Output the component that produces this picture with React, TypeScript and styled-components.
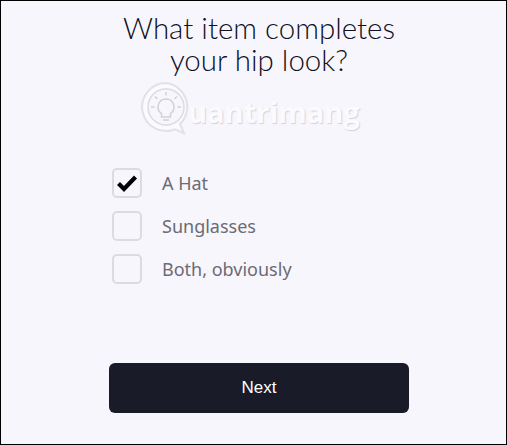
import { createGlobalStyle } from "styled-components";
import styled from "styled-components";

const GlobalStyle = createGlobalStyle`
  html, body {
    margin: 0;
    padding: 0;
  }
`;

const Page = styled.div`
  position: relative;
  box-sizing: border-box;
  width: 507px;
  height: 445px;
  display: flex;
  flex-direction: column;
  align-items: center;
  padding-left: 11px;
  background-color: #f8f6fd;
  border: 1px solid #000;
  overflow: hidden;
`;

const Title = styled.h1`
  margin: 11px 0 0;
  font-family: "Lato", sans-serif;
  font-weight: 300;
  font-size: 29.5px;
  line-height: 32px;
  color: #0f1020;
  text-align: center;
`;

const Options = styled.div`
  display: flex;
  flex-direction: column;
  gap: 13px;
  align-self: flex-start;
  margin: 92px 0 0 100px;
`;

const Option = styled.label`
  display: flex;
  align-items: center;
  gap: 20px;
  font-family: "Noto Sans", sans-serif;
  font-size: 18px;
  color: #6b6b73;
`;

const Box = styled.span`
  box-sizing: border-box;
  width: 30px;
  height: 30px;
  display: flex;
  align-items: center;
  justify-content: center;
  border: 2px solid #dcdbe0;
  border-radius: 5px;
`;

const NextButton = styled.button`
  width: 300px;
  height: 50px;
  margin-top: 79px;
  border: none;
  border-radius: 6px;
  background-color: #1a1b28;
  color: #fff;
  font-family: "Liberation Sans", sans-serif;
  font-size: 17px;
  font-weight: 400;
`;

const Watermark = styled.div`
  position: absolute;
  left: 138px;
  top: 80px;
  display: flex;
  align-items: flex-start;
`;

const WatermarkText = styled.span`
  margin: 13px 0 0 -5px;
  font-family: "Open Sans", sans-serif;
  font-size: 29px;
  font-weight: 700;
  line-height: 36px;
  color: #fbfafe;
  text-shadow: 1px 1px 1px #d4d3d8;
`;

const options = ["A Hat", "Sunglasses", "Both, obviously"];

const App = () => {
  return (
    <>
      <GlobalStyle />
      <Page>
        <Title>
          What item completes
          <br />
          your hip look?
        </Title>
        <Watermark>
          <svg width="54" height="54" viewBox="0 0 54 54" fill="none">
            <path d="M27 2a24 24 0 1 0 9 46.300l9 4-4-9.300A24 24 0 0 0 27 2z" fill="#fbfafe" stroke="#e2e1e6" strokeWidth="2" />
            <circle cx="27" cy="26" r="18" fill="#f8f6fd" stroke="#dcdbe0" strokeWidth="1.500" />
            <path d="M27 18a8 8 0 0 0-4.500 14.600V36h9v-3.400A8 8 0 0 0 27 18zM24 39h6" stroke="#d2d1d6" strokeWidth="1.500" />
            <path d="M27 11v3.500M16 15.500l2.500 2.500M38 15.500 35.500 18M12 26h3.500M38.500 26H42" stroke="#d2d1d6" strokeWidth="1.500" />
          </svg>
          <WatermarkText>uantrimang</WatermarkText>
        </Watermark>
        <Options>
          {options.map((label, idx) => (
            <Option key={label}>
              <Box>
                {idx === 0 && (
                  <svg width="22" height="18" viewBox="0 0 22 18">
                    <path d="M2.500 9.500 8 15 19.500 3" fill="none" stroke="#000" strokeWidth="4.200" />
                  </svg>
                )}
              </Box>
              {label}
            </Option>
          ))}
        </Options>
        <NextButton>Next</NextButton>
      </Page>
    </>
  );
};

export default App;
